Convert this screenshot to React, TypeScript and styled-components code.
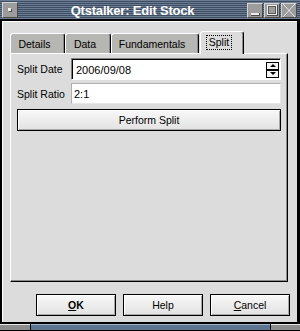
import React from "react";
import styled, { createGlobalStyle, css } from "styled-components";

const Global = createGlobalStyle`
  html, body { margin: 0; padding: 0; background: #000; }
  body {
    width: 300px; height: 331px; overflow: hidden;
    font-family: "Liberation Sans", Arial, sans-serif;
    font-size: 11px; color: #000;
  }
`;

const Window = styled.div`
  width: 300px;
  height: 331px;
  background: #000;
  display: flex;
  flex-direction: column;
`;

const TitleBar = styled.div`
  height: 19px;
  margin-bottom: 2px;
  box-sizing: border-box;
  padding: 0 3px 0 2px;
  display: flex;
  align-items: center;
  background: repeating-linear-gradient(to bottom, #6b7d93 0 1px, #3e4d61 1px 2px);
`;

const Title = styled.div`
  flex: 1;
  text-align: center;
  color: #fff;
  font-weight: bold;
  font-size: 13px;
  letter-spacing: -0.2px;
  padding-top: 2px;
  white-space: nowrap;
`;

const TitleButtons = styled.div`
  display: flex;
  gap: 1px;
  align-self: flex-end;
  margin-bottom: 1px;
`;

const TitleButton = styled.div<{ $h?: number }>`
  width: 16px;
  height: ${(p) => p.$h ?? 16}px;
  box-sizing: border-box;
  flex-shrink: 0;
  background: #9c9c9c;
  border: 1px solid;
  border-color: #d4d4d4 #4a4a4a #4a4a4a #d4d4d4;
  display: flex;
  align-items: center;
  justify-content: center;
  svg { display: block; }
`;

const Body = styled.div`
  flex: 1;
  margin: 0 3px 0 2px;
  background: #dcdcdc;
  border-top: 1px solid #fff;
  border-left: 1px solid #fff;
  padding: 9px 7px 0 7px;
  display: flex;
  flex-direction: column;
  min-height: 0;
`;

const TabWidget = styled.div`
  margin-right: 2px;
  display: flex;
  flex-direction: column;
`;

const TabBar = styled.div`
  height: 22px;
  display: flex;
  align-items: flex-end;
  position: relative;
  z-index: 2;
`;

const Tab = styled.div<{ $w: number; $active?: boolean }>`
  box-sizing: border-box;
  width: ${(p) => p.$w}px;
  height: 20px;
  background: #b6b6b2;
  border: 1px solid;
  border-bottom: none;
  border-color: #fff #000 transparent #fff;
  border-radius: 3px 3px 0 0;
  box-shadow: inset -1px 0 #8a8a8a;
  display: flex;
  align-items: center;
  justify-content: center;
  padding-right: 6px;
  font-size: 10.5px;
  ${(p) =>
    p.$active &&
    css`
      background: #dcdcdc;
      height: 23px;
      margin-left: 1px;
      margin-bottom: -1px;
      padding-bottom: 2px;
    `}
`;

const FocusLabel = styled.span`
  outline: 1px dotted #000;
  padding: 0 2px;
  line-height: 13px;
`;

const Panel = styled.div`
  height: 229px;
  box-sizing: border-box;
  border: 1px solid;
  border-color: #fff #000 #000 #fff;
  box-shadow: inset -1px -1px #8a8a8a;
  padding: 4px 6px;
  display: flex;
  flex-direction: column;
`;

const FormRow = styled.div<{ $h: number; $gap?: number }>`
  display: grid;
  grid-template-columns: 54px 1fr;
  align-items: center;
  height: ${(p) => p.$h}px;
  margin-top: ${(p) => p.$gap ?? 0}px;
`;

const Label = styled.span`
  font-size: 10.5px;
  white-space: nowrap;
`;

const SpinBox = styled.div`
  height: 22px;
  box-sizing: border-box;
  border: 1px solid;
  border-color: #808080 #fff #fff #808080;
  box-shadow: inset 1px 1px #000;
  background: #fff;
  display: flex;
  align-items: center;
  padding: 1px 1px 0 4px;
`;

const FieldText = styled.span`
  flex: 1;
  font-size: 11px;
`;

const Arrows = styled.div`
  display: flex;
  flex-direction: column;
  gap: 0;
  margin-right: 0;
`;

const ArrowButton = styled.div<{ $down?: boolean }>`
  width: 13px;
  height: 8px;
  box-sizing: border-box;
  border: 1px solid #000;
  background: #f4f4f4;
  display: flex;
  align-items: center;
  justify-content: center;
  &::after {
    content: "";
    width: 0;
    height: 0;
    border-left: 3px solid transparent;
    border-right: 3px solid transparent;
    ${(p) =>
      p.$down
        ? css`border-top: 3px solid #000;`
        : css`border-bottom: 3px solid #000;`}
  }
`;

const LineEdit = styled.div`
  height: 21px;
  box-sizing: border-box;
  border: 1px solid;
  border-color: #b0b0b0 #e6e6e6 #e6e6e6 #b0b0b0;
  background: #fff;
  display: flex;
  align-items: center;
  padding-left: 2px;
`;

const PushButton = styled.div<{ $w?: number }>`
  box-sizing: border-box;
  height: 22px;
  ${(p) => (p.$w ? css`width: ${p.$w}px;` : "")}
  border: 1px solid #000;
  box-shadow: inset 1px 1px #fff, inset -1px -1px #a8a8a8;
  background: linear-gradient(to bottom, #f8f8f8, #e2e2e2);
  display: flex;
  align-items: center;
  justify-content: center;
  font-size: 10.5px;
`;

const WideButton = styled(PushButton)`
  margin-top: 5px;
`;

const ButtonRow = styled.div`
  margin-top: 12px;
  display: flex;
  justify-content: flex-end;
  gap: 7px;
`;

const Bold = styled.span`
  font-weight: bold;
`;

const Accel = styled.span`
  text-decoration: underline;
`;

const ResizeBar = styled.div`
  height: 9px;
  box-sizing: border-box;
  padding: 2px 0 1px;
  display: flex;
  gap: 1px;
`;

const Segment = styled.div<{ $w?: number; $blue?: boolean }>`
  ${(p) => (p.$w ? css`width: ${p.$w}px;` : css`flex: 1;`)}
  border-top: 1px solid ${(p) => (p.$blue ? "#9fb2c8" : "#e8e8e8")};
  background: ${(p) => (p.$blue ? "#5d7490" : "#8c8c8c")};
`;

export default function App() {
  return (
    <>
      <Global />
      <Window>
        <TitleBar>
          <TitleButton>
            <svg width="4" height="4" viewBox="0 0 4 4">
              <rect x="0" y="0" width="3" height="3" fill="#f0f0f0" />
              <rect x="1" y="1" width="3" height="3" fill="#505050" />
              <rect x="1" y="1" width="2" height="2" fill="#f0f0f0" />
            </svg>
          </TitleButton>
          <Title>Qtstalker: Edit Stock</Title>
          <TitleButtons>
            <TitleButton $h={15}>
              <svg width="14" height="13" viewBox="0 0 14 13">
                <rect x="3" y="9" width="8" height="2" fill="#ececec" />
                <rect x="3" y="11" width="9" height="1" fill="#4a4a4a" />
                <rect x="11" y="9" width="1" height="3" fill="#4a4a4a" />
              </svg>
            </TitleButton>
            <TitleButton $h={15}>
              <svg width="14" height="13" viewBox="0 0 14 13">
                <rect x="2.5" y="1.5" width="9" height="9" fill="none" stroke="#ececec" strokeWidth="1" />
                <rect x="3.5" y="2.5" width="7" height="7" fill="none" stroke="#5a5a5a" strokeWidth="1" />
                <rect x="2" y="11" width="11" height="1" fill="#4a4a4a" />
                <rect x="12" y="1" width="1" height="11" fill="#4a4a4a" />
              </svg>
            </TitleButton>
            <TitleButton $h={15}>
              <svg width="14" height="13" viewBox="0 0 14 13">
                <path d="M1 0 L13 13 M13 0 L1 13" stroke="#e6e6e6" strokeWidth="1" fill="none" />
              </svg>
            </TitleButton>
          </TitleButtons>
        </TitleBar>
        <Body>
          <TabWidget>
            <TabBar>
              <Tab $w={55}>Details</Tab>
              <Tab $w={46}>Data</Tab>
              <Tab $w={88}>Fundamentals</Tab>
              <Tab $w={44} $active>
                <FocusLabel>Split</FocusLabel>
              </Tab>
            </TabBar>
            <Panel>
              <FormRow $h={22}>
                <Label>Split Date</Label>
                <SpinBox>
                  <FieldText>2006/09/08</FieldText>
                  <Arrows>
                    <ArrowButton />
                    <ArrowButton $down />
                  </Arrows>
                </SpinBox>
              </FormRow>
              <FormRow $h={21} $gap={3}>
                <Label>Split Ratio</Label>
                <LineEdit>
                  <FieldText>2:1</FieldText>
                </LineEdit>
              </FormRow>
              <WideButton>Perform Split</WideButton>
            </Panel>
          </TabWidget>
          <ButtonRow>
            <PushButton $w={80}>
              <Bold>
                <Accel>O</Accel>K
              </Bold>
            </PushButton>
            <PushButton $w={80}>Help</PushButton>
            <PushButton $w={80}>
              <span>
                <Accel>C</Accel>ancel
              </span>
            </PushButton>
          </ButtonRow>
        </Body>
        <ResizeBar>
          <Segment $w={30} />
          <Segment $blue />
          <Segment $w={29} />
        </ResizeBar>
      </Window>
    </>
  );
}
